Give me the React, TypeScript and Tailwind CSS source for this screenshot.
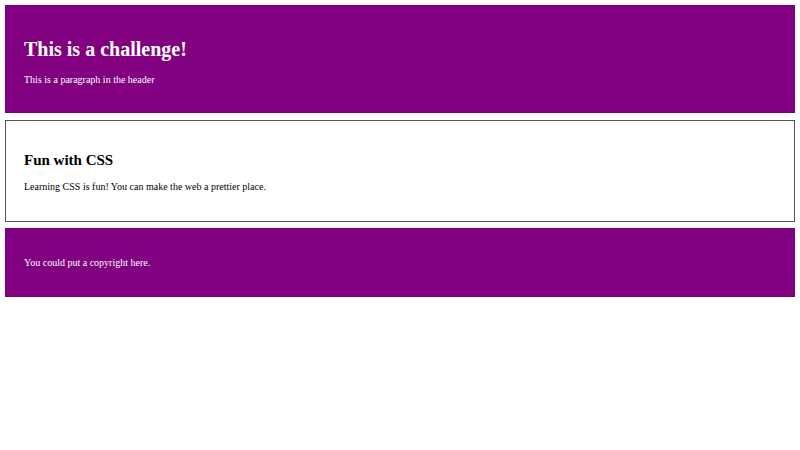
export default function App() {
  return (
    <div className="min-h-[450px] bg-white p-[5px] font-['Liberation_Serif','Times_New_Roman',serif] text-black">
      <header className="bg-[#800080] px-[19px] pt-[20px] pb-[28px] text-white">
        <h1 className="mt-[13px] text-[20px] font-bold leading-[22px]">This is a challenge!</h1>
        <p className="mt-[14px] text-[10px] leading-[11px]">This is a paragraph in the header</p>
      </header>

      <main className="mt-[7px] border border-[#555] px-[18px] pt-[31px] pb-[29px]">
        <h2 className="text-[15px] font-bold leading-[17px]">Fun with CSS</h2>
        <p className="mt-[12px] text-[10px] leading-[11px]">
          Learning CSS is fun! You can make the web a prettier place.
        </p>
      </main>

      <footer className="mt-[6px] bg-[#800080] px-[19px] py-[29px] text-white">
        <p className="text-[10px] leading-[11px]">You could put a copyright here.</p>
      </footer>
    </div>
  );
}
